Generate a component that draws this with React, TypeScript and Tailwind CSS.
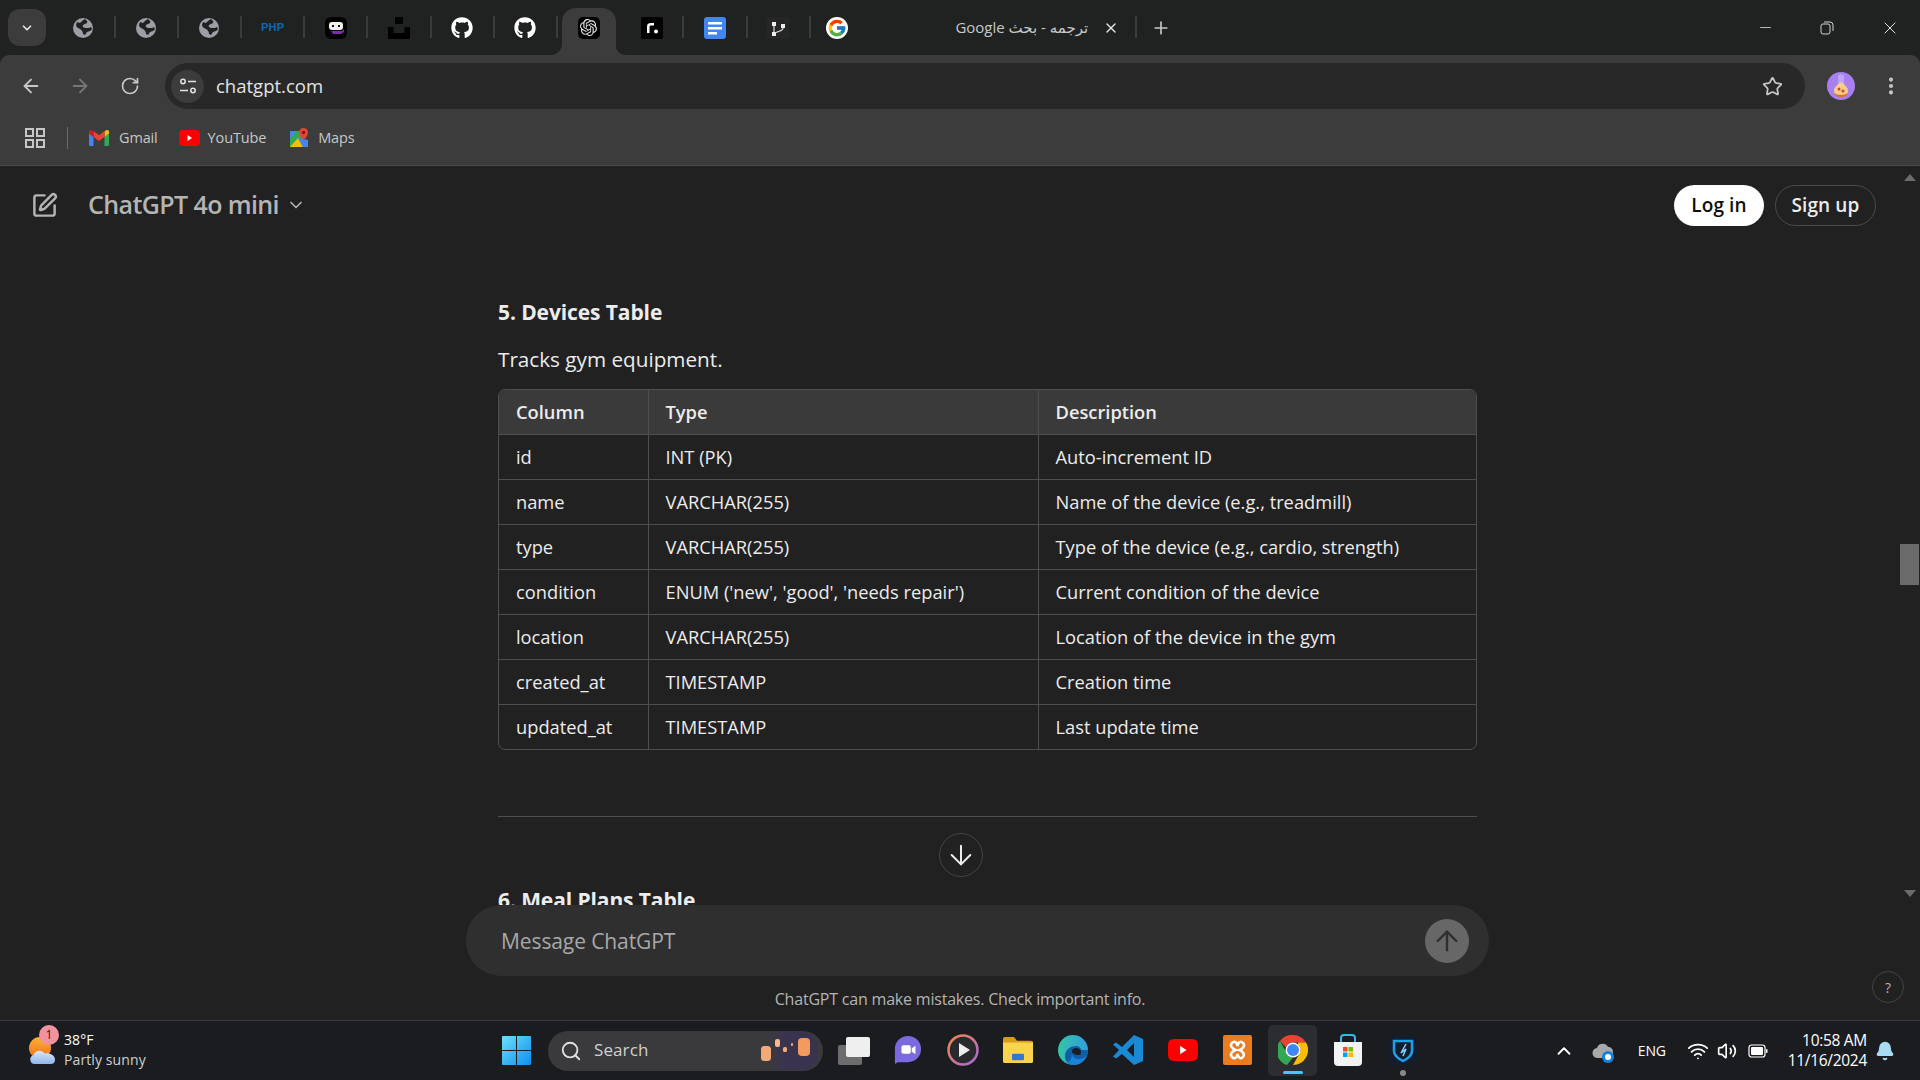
import { ArrowDown, ArrowLeft, ArrowRight, ArrowUp, Bell, ChevronDown, ChevronUp, EllipsisVertical, Minus, Plus, RotateCw, Search, SquarePen, Star, Volume2, Wifi, X } from 'lucide-react';
import { FaGithub } from 'react-icons/fa';
import { FcGoogle } from 'react-icons/fc';
import { SiOpenai } from 'react-icons/si';

const rows = [
  ['id', 'INT (PK)', 'Auto-increment ID'],
  ['name', 'VARCHAR(255)', 'Name of the device (e.g., treadmill)'],
  ['type', 'VARCHAR(255)', 'Type of the device (e.g., cardio, strength)'],
  ['condition', "ENUM ('new', 'good', 'needs repair')", 'Current condition of the device'],
  ['location', 'VARCHAR(255)', 'Location of the device in the gym'],
  ['created_at', 'TIMESTAMP', 'Creation time'],
  ['updated_at', 'TIMESTAMP', 'Last update time'],
];

function Globe() {
  return (
    <svg width="20" height="20" viewBox="0 0 20 20">
      <circle cx="10" cy="10" r="10" fill="#9aa0a6" />
      <path d="M12 1c1 1 3 2 2 4-1 1-3 1-4 2-1 2 1 3 3 3s4 0 5-1l1 2c-1 2-3 2-5 3l-2 3-2-1c0-2-1-4-3-5S3 9 3 7l1-3 3 1 2-2z" fill="#202222" />
    </svg>
  );
}

function Robot() {
  return (
    <svg width="22" height="22" viewBox="0 0 22 22">
      <rect width="22" height="22" rx="6" fill="#000" />
      <rect x="4" y="5" width="14" height="8" rx="3" fill="#f2f2f2" />
      <rect x="7" y="8" width="2" height="2" fill="#111" />
      <rect x="13" y="8" width="2" height="2" fill="#111" />
      <path d="M6 14h11l2-2v3l-3 2H8z" fill="#7b2fa8" />
    </svg>
  );
}

function Blocks() {
  return (
    <svg width="22" height="22" viewBox="0 0 22 22">
      <path d="M7 0h8v7H7zM0 10h5.500v6h11v-6H22v12H0z" fill="#000" />
    </svg>
  );
}

function ChatGptFav() {
  return (
    <span className="flex h-[22px] w-[22px] items-center justify-center rounded-[5px] bg-black">
      <SiOpenai size={17} color="#e8e8e8" />
    </span>
  );
}

function RFav() {
  return (
    <svg width="22" height="22" viewBox="0 0 22 22">
      <rect width="22" height="22" rx="2" fill="#000" />
      <path d="M6 16V9.500C6 7 7.500 6 10 6h3v2.500h-3c-1 0-1.500.5-1.500 1.500v6z" fill="#fff" />
      <circle cx="15" cy="14.500" r="2" fill="#fff" />
    </svg>
  );
}

function DocsFav() {
  return (
    <svg width="22" height="22" viewBox="0 0 22 22">
      <rect width="22" height="22" rx="3" fill="#4285f4" />
      <rect x="4" y="5" width="14" height="2.500" fill="#fff" />
      <rect x="4" y="10" width="14" height="2.500" fill="#fff" />
      <rect x="4" y="15" width="9" height="2.500" fill="#fff" />
    </svg>
  );
}

function GitFav() {
  return (
    <svg width="22" height="22" viewBox="0 0 22 22" fill="none">
      <rect width="22" height="22" rx="4" fill="#262626" />
      <rect x="5" y="5" width="4" height="4" fill="#eee" />
      <rect x="14" y="7" width="4" height="4" fill="#eee" />
      <rect x="5" y="15" width="4" height="4" fill="#eee" />
      <path d="M7 9v6M16 11c0 3-4 3-8 5" stroke="#ddd" strokeWidth="1.200" />
    </svg>
  );
}

function Tab({ children, sep = true, active = false }: { children: React.ReactNode; sep?: boolean; active?: boolean }) {
  return (
    <div className="relative flex h-full w-[63.200px] shrink-0 items-center justify-center">
      {active && (
        <>
          <div className="absolute inset-x-[4.500px] bottom-0 top-[8px] rounded-t-[14px] bg-[#3c3c3c]" />
          <svg className="absolute bottom-0 left-[-6px]" width="11" height="11" viewBox="0 0 11 11">
            <path d="M0 11c6 0 11-5 11-11v11z" fill="#3c3c3c" />
          </svg>
          <svg className="absolute bottom-0 right-[-6px]" width="11" height="11" viewBox="0 0 11 11">
            <path d="M11 11C5 11 0 6 0 0v11z" fill="#3c3c3c" />
          </svg>
        </>
      )}
      <div className="relative flex">{children}</div>
      {sep && <div className="absolute right-[-1px] top-[16px] h-[22px] w-[2px] bg-[#3a3b3b]" />}
    </div>
  );
}

function GmailIcon() {
  return (
    <svg width="20" height="16" viewBox="0 0 20 16">
      <path d="M0 3v11.500A1.500 1.500 0 0 0 1.500 16H4.500V7z" fill="#4285f4" />
      <path d="M20 3v11.500a1.500 1.500 0 0 1-1.500 1.500H15.500V7z" fill="#34a853" />
      <path d="M15.500 1v6L20 3.500V2c0-2-2-2.500-3-1.500z" fill="#fbbc04" />
      <path d="M4.500 1v6L10 11l5.500-4V1L10 5.200z" fill="#ea4335" />
      <path d="M0 2v1.500L4.500 7V1L3 .5C2-.5 0 0 0 2z" fill="#c5221f" />
    </svg>
  );
}

function YoutubeIcon({ w = 21, h = 16 }: { w?: number; h?: number }) {
  return (
    <svg width={w} height={h} viewBox="0 0 21 16" preserveAspectRatio="none">
      <rect width="21" height="16" rx="4" fill="#f00" />
      <path d="M8.500 5l4.500 3-4.500 3z" fill="#fff" />
    </svg>
  );
}

function MapsIcon() {
  return (
    <svg width="20" height="20" viewBox="0 0 20 20">
      <path d="M1 3h12v16H1z" fill="#34a853" />
      <path d="M1 19l8-9 5 9z" fill="#fbbc04" />
      <path d="M1 3h7L1 11z" fill="#4285f4" opacity="0.900" />
      <path d="M9 10l5 9h5V12z" fill="#4285f4" />
      <path d="M14.500 0C12 0 10 2 10 4.500 10 8 14.500 12 14.500 12S19 8 19 4.500C19 2 17 0 14.500 0z" fill="#ea4335" />
      <circle cx="14.500" cy="4.500" r="1.700" fill="#7b1a14" />
    </svg>
  );
}

function AppsIcon() {
  return (
    <svg width="20" height="20" viewBox="0 0 20 20" fill="none" stroke="#c7c7c7" strokeWidth="2">
      <rect x="1" y="1" width="7" height="7" />
      <rect x="12" y="1" width="7" height="7" />
      <rect x="1" y="12" width="7" height="7" />
      <rect x="12" y="12" width="7" height="7" />
    </svg>
  );
}

function TuneIcon() {
  return (
    <svg width="18" height="18" viewBox="0 0 18 18" fill="none" stroke="#e3e3e3" strokeWidth="1.500">
      <circle cx="4" cy="4.500" r="2.200" />
      <path d="M9 4.500h8M1 13.500h8" />
      <circle cx="14" cy="13.500" r="2.200" />
    </svg>
  );
}

function Avatar() {
  return (
    <svg width="28" height="28" viewBox="0 0 28 28">
      <circle cx="14" cy="14" r="14" fill="#a77ff0" />
      <path d="M12 3v10M14 2v10M16 3v10" stroke="#d9c8fb" strokeWidth="1" />
      <path d="M7 19c0-4 4-7 7-9 3 2 7 5 7 9 0 3-3 5-7 5s-7-2-7-5z" fill="#f5cf83" />
      <circle cx="12" cy="17" r="1.500" fill="#d8402f" />
      <circle cx="16" cy="19" r="1.500" fill="#d8402f" />
      <path d="M7 21c1 3 4 4 7 4s6-1 7-4c-2 1-4 2-7 2s-5-1-7-2z" fill="#e86a2c" />
    </svg>
  );
}

function WeatherIcon() {
  return (
    <svg width="27" height="27" viewBox="0 0 27 27">
      <defs>
        <linearGradient id="sun" x1="0" y1="0" x2="0" y2="1">
          <stop offset="0" stopColor="#fbb233" />
          <stop offset="1" stopColor="#f1701c" />
        </linearGradient>
        <linearGradient id="cloud" x1="0" y1="0" x2="0" y2="1">
          <stop offset="0" stopColor="#d9e8fb" />
          <stop offset="1" stopColor="#8fb6ea" />
        </linearGradient>
      </defs>
      <circle cx="12" cy="11" r="11" fill="url(#sun)" />
      <path d="M7 27a4.500 4.500 0 0 1-1.500-8.800C6.500 13 14 12 16.500 16.500 21 15.500 27 18 27 22.500S24 27 21 27z" fill="url(#cloud)" />
    </svg>
  );
}

function WinLogo() {
  return (
    <svg width="29" height="29" viewBox="0 0 29 29">
      <defs>
        <linearGradient id="win" x1="0" y1="0" x2="1" y2="1">
          <stop offset="0" stopColor="#6ce0fb" />
          <stop offset="1" stopColor="#0f8df0" />
        </linearGradient>
      </defs>
      <path d="M1 0h13v14H0V1a1 1 0 0 1 1-1zM15 0h13a1 1 0 0 1 1 1v13H15zM0 15h14v14H1a1 1 0 0 1-1-1zM15 15h14v13a1 1 0 0 1-1 1H15z" fill="url(#win)" />
    </svg>
  );
}

function Lanterns() {
  return (
    <svg width="60" height="38" viewBox="0 0 60 38">
      <defs>
        <linearGradient id="dusk" x1="0" y1="0" x2="1" y2="0">
          <stop offset="0" stopColor="#3a3a3d" />
          <stop offset="0.400" stopColor="#3a3350" />
          <stop offset="1" stopColor="#3a3350" />
        </linearGradient>
      </defs>
      <rect x="8" y="0" width="52" height="38" rx="16" fill="url(#dusk)" />
      <rect x="3" y="14" width="10" height="15" rx="3.500" fill="#f3a877" />
      <rect x="17" y="7" width="5" height="8" rx="2" fill="#f5b98b" />
      <rect x="25" y="15" width="4" height="5" rx="1.500" fill="#f3a877" />
      <rect x="33" y="11" width="2" height="3" rx="1" fill="#f3a877" />
      <rect x="40" y="6" width="12" height="18" rx="4" fill="#f59a5e" />
    </svg>
  );
}

function TaskView() {
  return (
    <svg width="32" height="28" viewBox="0 0 32 28">
      <rect x="0" y="8" width="24" height="20" rx="2" fill="#6d6d6d" />
      <rect x="8" y="0" width="24" height="20" rx="2" fill="#efefef" />
    </svg>
  );
}

function MeetIcon() {
  return (
    <svg width="28" height="28" viewBox="0 0 30 30">
      <path d="M15 0c8 0 14 6 14 14s-6 14-14 14H4l-3 2V14C1 6 7 0 15 0z" fill="#7a6ae0" />
      <rect x="8" y="10" width="10" height="9" rx="2" fill="#fff" />
      <path d="M19 13l4-2.500v9L19 17z" fill="#fff" />
    </svg>
  );
}

function PlayIcon() {
  return (
    <svg width="32" height="32" viewBox="0 0 32 32" fill="none">
      <defs>
        <linearGradient id="ring" x1="0" y1="0" x2="1" y2="1">
          <stop offset="0" stopColor="#f1884a" />
          <stop offset="1" stopColor="#a568d8" />
        </linearGradient>
      </defs>
      <circle cx="16" cy="16" r="14.500" stroke="url(#ring)" strokeWidth="2.500" fill="#2a2a2e" />
      <path d="M12 9l11 7-11 7z" fill="#eee" />
    </svg>
  );
}

function FolderIcon() {
  return (
    <svg width="30" height="26" viewBox="0 0 30 28" preserveAspectRatio="none">
      <path d="M0 2a2 2 0 0 1 2-2h9l3 4h14a2 2 0 0 1 2 2v4H0z" fill="#d89c1c" />
      <path d="M0 6h30v20a2 2 0 0 1-2 2H2a2 2 0 0 1-2-2z" fill="#fcd34d" />
      <rect x="9" y="18" width="12" height="7" rx="1" fill="#2a7bd2" />
    </svg>
  );
}

function EdgeIcon() {
  return (
    <svg width="30" height="30" viewBox="0 0 30 30">
      <defs>
        <linearGradient id="edgeA" x1="0" y1="0" x2="1" y2="0">
          <stop offset="0" stopColor="#36c4a4" />
          <stop offset="1" stopColor="#2f9fe0" />
        </linearGradient>
      </defs>
      <circle cx="15" cy="15" r="15" fill="url(#edgeA)" />
      <path d="M30 15c0 8-6 15-14 15-5 0-9-3-9-9 0-7 6-10 11-10 3 0 5 2 5 4h7z" fill="#0f5fa8" />
      <path d="M20 20c-4 0-6-2-6-4s2-3 4-3 5 1 5 4-1 3-3 3z" fill="#1d1e22" />
      <path d="M14 18c0 4 3 6 7 6 3 0 6-1 8-4-2 6-7 10-13 10-3 0-5-1-7-3 3 0 5-4 5-9z" fill="#1a82d8" />
    </svg>
  );
}

function VsCodeIcon() {
  return (
    <svg width="30" height="30" viewBox="0 0 30 30">
      <path d="M21 0l9 4v22l-9 4-12-11-6 4.500-3-2L6 15 0 9.500l3-2L9 12zM21 8l-7 7 7 7z" fill="#1a8ad6" />
    </svg>
  );
}

function XamppIcon() {
  return (
    <svg width="29" height="30" viewBox="0 0 29 30" fill="none">
      <rect width="29" height="30" rx="2" fill="#ea7c21" />
      <path d="M9 8c3-3 5 0 5.500 3C15 8 17 5 20 8s-1 6-3.500 7c2.500 1 6 4 3.500 7s-5 0-5.500-3c-.5 3-2.500 6-5.500 3s1-6 3.500-7C10 14 6 11 9 8z" stroke="#fff" strokeWidth="2.500" />
    </svg>
  );
}

function ChromeIcon() {
  return (
    <svg width="30" height="30" viewBox="0 0 30 30">
      <path d="M15 0a15 15 0 0 1 13 7.500H15a7.500 7.500 0 0 0-7 5L2 6A15 15 0 0 1 15 0z" fill="#ea4335" />
      <path d="M2 6l6.500 11.500A7.500 7.500 0 0 0 15 22.500L9 30A15 15 0 0 1 2 6z" fill="#34a853" />
      <path d="M28 7.500A15 15 0 0 1 15 30l6.500-11.500A7.500 7.500 0 0 0 20 10V7.500z" fill="#fbbc04" />
      <circle cx="15" cy="15" r="7.500" fill="#fff" />
      <circle cx="15" cy="15" r="6" fill="#4285f4" />
    </svg>
  );
}

function StoreIcon() {
  return (
    <svg width="30" height="32" viewBox="0 0 30 32" fill="none">
      <path d="M8 8V4a3 3 0 0 1 3-3h8a3 3 0 0 1 3 3v4" stroke="#38b6e8" strokeWidth="2" />
      <path d="M1 8h28v20a4 4 0 0 1-4 4H5a4 4 0 0 1-4-4z" fill="#f3f3f3" />
      <rect x="10" y="13" width="4.500" height="4.500" fill="#f25022" />
      <rect x="15.500" y="13" width="4.500" height="4.500" fill="#7fba00" />
      <rect x="10" y="18.500" width="4.500" height="4.500" fill="#00a4ef" />
      <rect x="15.500" y="18.500" width="4.500" height="4.500" fill="#ffb900" />
    </svg>
  );
}

function ShieldIcon() {
  return (
    <svg width="28" height="30" viewBox="0 0 28 30" fill="none">
      <rect width="28" height="30" rx="6" fill="#141c30" />
      <path d="M5 6h18v10c0 5-5 8-9 10-4-2-9-5-9-10z" stroke="#1aa3e8" strokeWidth="2.500" />
      <path d="M17 9l-5 9 5-4-3 7" stroke="#7fd4f7" strokeWidth="1.500" />
    </svg>
  );
}

function OneDriveCloud() {
  return (
    <svg width="24" height="26" viewBox="0 0 24 26">
      <path d="M6 20a5 5 0 0 1-1-10c1-5 9-6 11-1 3 0 5 2 5 5v6z" fill="#a9a9a9" />
      <circle cx="16" cy="19" r="6" fill="#1580d8" />
      <circle cx="16" cy="19" r="3" fill="#fff" />
    </svg>
  );
}

function Battery() {
  return (
    <svg width="20" height="14" viewBox="0 0 20 14" fill="none">
      <rect x="1" y="1" width="16" height="12" rx="2.500" stroke="#fff" strokeWidth="1.200" />
      <rect x="3" y="3" width="12" height="8" rx="1" fill="#fff" />
      <rect x="18" y="5" width="1.500" height="4" rx="0.700" fill="#fff" />
    </svg>
  );
}

function Slot({ children }: { children: React.ReactNode }) {
  return <div className="relative flex h-full w-[55px] shrink-0 items-center justify-center pb-[2px]">{children}</div>;
}

export default function App() {
  return (
    <div className="flex h-screen w-full flex-col overflow-hidden bg-[#212121] font-['Open_Sans','DejaVu_Sans',sans-serif] text-[#ececec]">
      {/* tab strip */}
      <div className="flex h-[55px] shrink-0 items-center bg-[#202222]">
        <div className="ml-[8px] mr-[5.500px] flex h-[37px] w-[38px] shrink-0 items-center justify-center rounded-[12px] bg-[#3c3c3c]">
          <ChevronDown size={14} strokeWidth={3} color="#e3e3e3" />
        </div>
        <Tab><Globe /></Tab>
        <Tab><Globe /></Tab>
        <Tab><Globe /></Tab>
        <Tab><span className="font-['Liberation_Sans',sans-serif] text-[11px] font-bold tracking-[0.300px] text-[#0a6ab5]">PHP</span></Tab>
        <Tab><Robot /></Tab>
        <Tab><Blocks /></Tab>
        <Tab><FaGithub size={22} color="#fff" /></Tab>
        <Tab sep={true}><FaGithub size={22} color="#fff" /></Tab>
        <Tab sep={false} active><ChatGptFav /></Tab>
        <Tab><RFav /></Tab>
        <Tab><DocsFav /></Tab>
        <Tab><GitFav /></Tab>
        <div className="relative flex h-full w-[327px] shrink-0 items-center pl-[16px]">
          <span className="flex rounded-full bg-white p-px"><FcGoogle size={20} /></span>
          <span className="ml-[100.500px] w-[140px] whitespace-nowrap text-right text-[15px] text-[#c7c7c7]" dir="rtl">ترجمه - بحث Google</span>
          <X className="ml-[15px]" size={16} strokeWidth={2} color="#e3e3e3" />
          <div className="absolute right-0 top-[16px] h-[22px] w-[2px] bg-[#3a3b3b]" />
        </div>
        <Plus className="ml-[14px]" size={20} strokeWidth={2} color="#c7c7c7" />
        <div className="ml-auto flex items-center pr-[20px]">
          <Minus size={17} strokeWidth={1.200} color="#d0d0d0" />
          <svg className="ml-[46px]" width="14" height="14" viewBox="0 0 14 14" fill="none" stroke="#d0d0d0" strokeWidth="1">
            <rect x="1" y="3" width="9" height="10" rx="2" />
            <path d="M4 1h6a3 3 0 0 1 3 3v6" />
          </svg>
          <X className="ml-[46px]" size={20} strokeWidth={1.200} color="#e3e3e3" />
        </div>
      </div>

      {/* toolbar */}
      <div className="flex h-[111px] shrink-0 flex-col rounded-t-[9px] border-b border-[#4b4b4b] bg-[#3c3c3c]">
        <div className="mt-[8px] flex h-[46px] items-center">
          <ArrowLeft className="ml-[20px]" size={22} strokeWidth={2} color="#c7c7c7" />
          <ArrowRight className="ml-[27px]" size={22} strokeWidth={2} color="#777" />
          <RotateCw className="ml-[29px]" size={20} strokeWidth={2} color="#c7c7c7" />
          <div className="ml-[25px] flex h-[46px] w-[1640px] items-center rounded-full bg-[#282828] pl-[6px] pr-[22px]">
            <div className="flex h-[33px] w-[33px] items-center justify-center rounded-full bg-[#3c3c3c]">
              <TuneIcon />
            </div>
            <span className="ml-[12px] text-[18.500px] text-[#e3e3e3]">chatgpt.com</span>
            <Star className="ml-auto" size={21} strokeWidth={2} color="#c7c7c7" />
          </div>
          <div className="ml-[22px]"><Avatar /></div>
          <EllipsisVertical className="ml-[25px]" size={22} strokeWidth={2.500} color="#c7c7c7" />
        </div>
        <div className="flex flex-1 items-center pt-px text-[14.500px] tracking-[-0.150px] text-[#c7c7c7]">
          <div className="ml-[25px]"><AppsIcon /></div>
          <div className="ml-[22px] h-[22px] w-px bg-[#6a6a6a]" />
          <div className="ml-[21px]"><GmailIcon /></div>
          <span className="ml-[10px]">Gmail</span>
          <div className="ml-[21px]"><YoutubeIcon /></div>
          <span className="ml-[8px]">YouTube</span>
          <div className="ml-[23px]"><MapsIcon /></div>
          <span className="ml-[9px]">Maps</span>
        </div>
      </div>

      {/* page */}
      <div className="flex min-h-0 flex-1">
        <div className="min-w-0 flex-1">
          <div className="flex h-[739px] flex-col">
            <div className="flex h-[78px] shrink-0 items-center">
              <SquarePen className="ml-[31px]" size={27} strokeWidth={2.200} color="#b4b4b4" />
              <span className="ml-[30px] text-[25px] font-semibold tracking-[-0.600px] text-[#b4b4b4]">ChatGPT 4o mini</span>
              <ChevronDown className="ml-[7px]" size={20} strokeWidth={2} color="#b4b4b4" />
              <button className="ml-auto flex h-[41px] w-[90px] items-center justify-center rounded-full bg-white text-[19px] font-semibold tracking-[0.100px] text-[#0d0d0d]">Log in</button>
              <button className="ml-[11px] mr-[24px] flex h-[41px] w-[101px] items-center justify-center rounded-full border border-[#4a4a4a] text-[19px] font-semibold tracking-[0.100px] text-[#ececec]">Sign up</button>
            </div>
            <div className="relative min-h-0 flex-1 overflow-hidden">
              <div className="ml-[498px] w-[979px] pt-[52px]">
                <h3 className="text-[21px] font-bold leading-[32px] tracking-[-0.100px] text-[#ececec]">5. Devices Table</h3>
                <p className="mt-[15px] text-[20.700px] leading-[32px] text-[#ececec]">Tracks gym equipment.</p>
                <div className="mt-[14px] overflow-hidden rounded-[7px] border border-[#4e4e4e]">
                  <table className="w-full table-fixed border-collapse text-left text-[18.300px]">
                    <thead>
                      <tr className="h-[44px] bg-[#3a3a3a]">
                        <th className="w-[149px] border-r border-[#4e4e4e] pl-[17px] pr-[16px] font-semibold">Column</th>
                        <th className="w-[390px] border-r border-[#4e4e4e] pl-[17px] pr-[16px] font-semibold">Type</th>
                        <th className="pl-[17px] pr-[16px] font-semibold">Description</th>
                      </tr>
                    </thead>
                    <tbody>
                      {rows.map((r) => (
                        <tr key={r[0]} className="h-[45px] border-t border-[#4e4e4e]">
                          <td className="border-r border-[#4e4e4e] pl-[17px] pr-[16px]">{r[0]}</td>
                          <td className="border-r border-[#4e4e4e] pl-[17px] pr-[16px]">{r[1]}</td>
                          <td className="pl-[17px] pr-[16px]">{r[2]}</td>
                        </tr>
                      ))}
                    </tbody>
                  </table>
                </div>
                <div className="mt-[66px] h-px bg-[#4e4e4e]" />
                <h3 className="mt-[67px] text-[21px] font-bold leading-[32px] tracking-[-0.100px]">6. Meal Plans Table</h3>
              </div>
              <div className="absolute left-[939px] top-[589px] flex h-[44px] w-[44px] items-center justify-center rounded-full border border-[#444] bg-[#212121]">
                <ArrowDown size={32} strokeWidth={1.500} color="#ececec" />
              </div>
            </div>
          </div>
        </div>
        <div className="flex h-[739px] w-[20px] shrink-0 flex-col items-center pt-[8px]">
          <svg width="12" height="7" viewBox="0 0 12 7"><path d="M6 0l6 7H0z" fill="#6b6b6b" /></svg>
          <div className="mt-[363px] h-[41px] w-[19px] self-start bg-[#6b6b6b]" />
          <svg className="mt-[305px]" width="12" height="7" viewBox="0 0 12 7"><path d="M6 7L0 0h12z" fill="#6b6b6b" /></svg>
        </div>
      </div>

      {/* composer, sits under the clipped chat */}
      <div className="relative h-[115px] shrink-0">
        <div className="ml-[466px] flex h-[71px] w-[1023px] items-center rounded-[35px] bg-[#2f2f2f] pl-[35px] pr-[20px]">
          <span className="pt-[2px] text-[21px] tracking-[-0.100px] text-[#a8a8a8]">Message ChatGPT</span>
          <div className="ml-auto flex h-[44px] w-[44px] items-center justify-center rounded-full bg-[#676767]">
            <ArrowUp size={32} strokeWidth={1.800} color="#2f2f2f" />
          </div>
        </div>
        <p className="mt-[12px] text-center text-[16px] leading-[22px] tracking-[-0.200px] text-[#b4b4b4]">ChatGPT can make mistakes. Check important info.</p>
        <div className="absolute right-[16px] top-[66px] flex h-[32px] w-[32px] items-center justify-center rounded-full border border-[#444] text-[14px] text-[#b4b4b4]">?</div>
      </div>

      {/* taskbar */}
      <div className="flex h-[60px] shrink-0 items-center border-t border-[#3a3a3a] bg-[#1b1c20] text-white">
        <div className="relative ml-[28px] flex w-[474px] shrink-0 items-center">
          <WeatherIcon />
          <div className="absolute left-[11px] top-[-5px] flex h-[20px] w-[20px] items-center justify-center rounded-full bg-[#f2929f] text-[12px] text-[#1b1c20]">1</div>
          <div className="ml-[9px] pb-[2px] text-[14px] leading-[20px] tracking-[0.100px]">
            <div className="text-white">38°F</div>
            <div className="text-[#d0d0d0]">Partly sunny</div>
          </div>
        </div>
        <WinLogo />
        <div className="ml-[17px] flex h-[40px] w-[275px] shrink-0 items-center overflow-hidden rounded-full bg-[#3a3a3d] pl-[12px] pr-[5px]">
          <Search size={22} strokeWidth={2} color="#e0e0e0" />
          <span className="ml-[12px] pb-px text-[17px] tracking-[0.100px] text-[#d0d0d0]">Search</span>
          <div className="ml-auto flex"><Lanterns /></div>
        </div>
        <div className="ml-[15px] flex h-full w-[32px] shrink-0 items-center"><TaskView /></div>
        <div className="ml-[10px] flex h-full items-center">
          <Slot><MeetIcon /></Slot>
          <Slot><PlayIcon /></Slot>
          <Slot><FolderIcon /></Slot>
          <Slot><EdgeIcon /></Slot>
          <Slot><VsCodeIcon /></Slot>
          <Slot><YoutubeIcon w={30} h={22} /></Slot>
          <Slot><XamppIcon /></Slot>
          <Slot>
            <div className="absolute inset-x-[3px] inset-y-[4px] rounded-[5px] bg-[#2c2d31]" />
            <div className="relative"><ChromeIcon /></div>
            <div className="absolute bottom-[6px] h-[3px] w-[20px] rounded-full bg-[#4cc2ff]" />
          </Slot>
          <Slot><StoreIcon /></Slot>
          <Slot>
            <ShieldIcon />
            <div className="absolute bottom-[4px] h-[6px] w-[6px] rounded-full bg-[#8a8a8a]" />
          </Slot>
        </div>
        <div className="ml-auto flex items-center pr-[25px]">
          <ChevronUp size={22} strokeWidth={2} color="#fff" />
          <div className="ml-[17px]"><OneDriveCloud /></div>
          <span className="ml-[22px] text-[14px] tracking-[-0.200px]">ENG</span>
          <Wifi className="ml-[21px]" size={22} strokeWidth={2} color="#fff" />
          <Volume2 className="ml-[8px]" size={20} strokeWidth={2} color="#fff" />
          <div className="ml-[11px]"><Battery /></div>
          <div className="ml-[20px] pb-[2px] text-right text-[15.500px] leading-[20px] tracking-[-0.300px]">
            <div>10:58 AM</div>
            <div>11/16/2024</div>
          </div>
          <Bell className="ml-[8px]" size={20} strokeWidth={2} color="#a8dcf5" fill="#a8dcf5" />
        </div>
      </div>
    </div>
  );
}
